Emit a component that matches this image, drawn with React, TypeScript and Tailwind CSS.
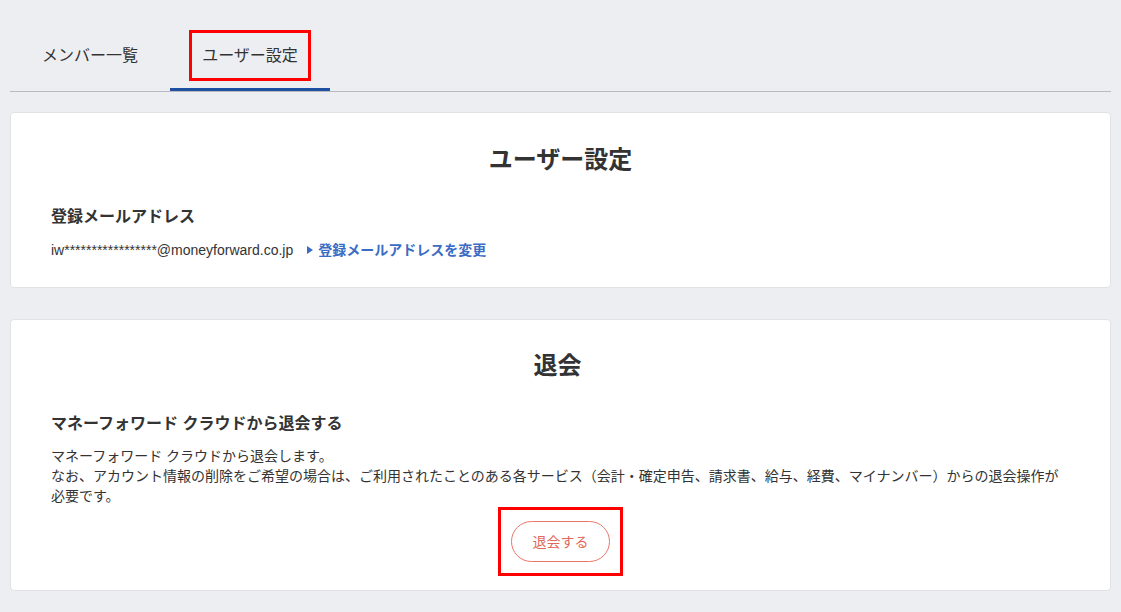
import React from "react";

const font = {
  fontFamily:
    '"Liberation Sans", "Noto Sans CJK JP", "Noto Sans", sans-serif',
};

export default function App() {
  return (
    <div
      className="min-h-[612px] bg-[#edeef2] px-[10px] text-[#333]"
      style={font}
    >
      <nav className="pt-[30px]">
        <div className="flex">
          <div className="flex w-[160px] flex-col items-center">
            <span className="flex h-[51px] items-center border-[3px] border-transparent px-[10px] text-base">
              メンバー一覧
            </span>
            <div className="mt-[7px] h-[3px] w-full" />
          </div>
          <div className="flex w-[160px] flex-col items-center">
            <span className="flex h-[51px] items-center border-[3px] border-[#ff0000] px-[10px] text-base">
              ユーザー設定
            </span>
            <div className="mt-[7px] h-[3px] w-full bg-[#1e50a2]" />
          </div>
        </div>
        <div className="h-px bg-[#b9bbc1]" />
      </nav>

      <section className="mt-[20px] rounded border border-[#e1e2e6] bg-white px-[40px] pb-[27px] pt-[31px]">
        <h1 className="text-center text-2xl font-bold leading-[32px]">
          ユーザー設定
        </h1>
        <h2 className="mt-[29px] text-base font-bold leading-6">
          登録メールアドレス
        </h2>
        <div className="mt-[11px] flex items-center text-sm leading-5">
          <span>iw*****************@moneyforward.co.jp</span>
          <a className="ml-[14px] flex items-center font-bold text-[#3b6cc4]">
            <svg width="6" height="8" viewBox="0 0 6 8" className="mr-[5px]">
              <path d="M0 0 L6 4 L0 8 Z" fill="#3b6cc4" />
            </svg>
            登録メールアドレスを変更
          </a>
        </div>
      </section>

      <section className="mt-[31px] rounded border border-[#e1e2e6] bg-white pb-[14px] pl-[40px] pr-[46px] pt-[30px]">
        <h1 className="text-center text-2xl font-bold leading-[32px]">退会</h1>
        <h2 className="mt-[30px] text-base font-bold leading-6">
          マネーフォワード クラウドから退会する
        </h2>
        <p className="mt-[10px] text-sm leading-5">
          マネーフォワード クラウドから退会します。
          <br />
          なお、アカウント情報の削除をご希望の場合は、ご利用されたことのある各サービス（会計・確定申告、請求書、給与、経費、マイナンバー）からの退会操作が必要です。
        </p>
        <div className="mt-px flex justify-center pl-[6px]">
          <div className="border-[3px] border-[#ff0000] px-[10px] py-[11px]">
            <button className="h-[41px] w-[99px] rounded-full border border-[#e8766a] text-sm text-[#e0695c]">
              退会する
            </button>
          </div>
        </div>
      </section>
    </div>
  );
}
